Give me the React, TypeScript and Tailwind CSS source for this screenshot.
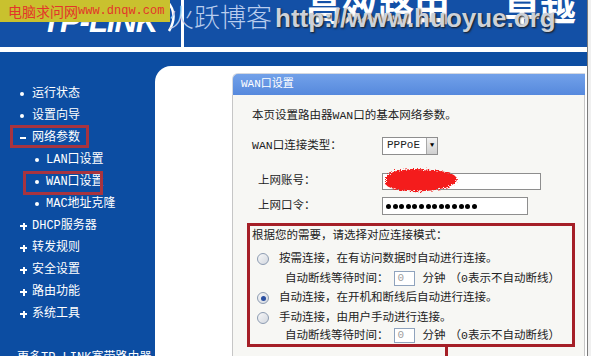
import React from "react";

type Item = {
  mark: "dot" | "minus" | "plus";
  label: string;
  sub?: boolean;
  box?: "group" | "page";
};

const menu: Item[] = [
  { mark: "dot", label: "运行状态" },
  { mark: "dot", label: "设置向导" },
  { mark: "minus", label: "网络参数", box: "group" },
  { mark: "dot", label: "LAN口设置", sub: true },
  { mark: "dot", label: "WAN口设置", sub: true, box: "page" },
  { mark: "dot", label: "MAC地址克隆", sub: true },
  { mark: "plus", label: "DHCP服务器" },
  { mark: "plus", label: "转发规则" },
  { mark: "plus", label: "安全设置" },
  { mark: "plus", label: "路由功能" },
  { mark: "plus", label: "系统工具" },
];

const Mark = ({ kind }: { kind: Item["mark"] }) => {
  if (kind === "dot") return <span className="w-[4px] h-[4px] rounded-full bg-white" />;
  if (kind === "minus") return <span className="w-[6px] h-[2px] bg-white" />;
  return (
    <span className="relative w-[7px] h-[7px]">
      <span className="absolute left-0 top-[2.5px] w-[7px] h-[2px] bg-white" />
      <span className="absolute top-0 left-[2.5px] w-[2px] h-[7px] bg-white" />
    </span>
  );
};

const Header = () => (
  <div className="relative h-[47px] shrink-0 flex overflow-hidden bg-[#1350a6]">
    <div className="w-[181px]" />
    <div className="w-[3px] bg-white" />
    <div className="flex-1" />

    {/* slogan behind the watermark */}
    <div className="absolute left-[306px] top-[-13px] flex text-[36px] font-bold leading-none text-white font-['Noto_Sans_CJK_SC',sans-serif]">
      <span>高效路由</span>
      <span className="ml-[54px]">卓越</span>
    </div>

    {/* logo */}
    <div className="absolute left-[42px] top-[6px] text-[31px] font-bold italic leading-none tracking-[-1px] text-white font-['Liberation_Sans',sans-serif]">
      TP-LINK
    </div>
    <svg className="absolute left-[164px] top-0" width="16" height="34" viewBox="0 0 16 34">
      <path d="M3 1 Q15 14 5 31" stroke="#ffffff" strokeWidth="2.5" fill="none" />
    </svg>

    {/* watermarks */}
    <div className="absolute left-0 top-0 w-[170px] h-[22px] bg-[#c9c12e] flex items-center pl-[8px] text-[#e3352a]">
      <span className="text-[14px] leading-none font-['Noto_Sans_CJK_SC',sans-serif]">电脑求问网</span>
      <span className="text-[12px] leading-none font-['Liberation_Mono',monospace]">www.dnqw.com</span>
    </div>
    <div className="absolute left-[168px] top-[3px] text-[26px] font-light leading-none text-[#b9cdee] font-['Noto_Sans_CJK_SC',sans-serif]">
      火跃博客
    </div>
    <div className="absolute left-[275px] top-[5px] text-[26px] font-bold leading-none text-[#cdd1d8] font-['Liberation_Sans',sans-serif] [text-shadow:1px_1px_2px_#1b1b1b]">
      http://www.huoyue.org
    </div>
  </div>
);

const Sidebar = () => (
  <div className="w-[155px] shrink-0 pt-[31px] text-[12px] text-white">
    {menu.map((item) => (
      <div key={item.label} className={`relative h-[22px] flex items-center ${item.sub ? "pl-[35px]" : "pl-[20px]"}`}>
        <span className={`flex items-center ${item.sub ? "w-[11px]" : "w-[12px]"}`}>
          <Mark kind={item.mark} />
        </span>
        <span className="leading-none">{item.label}</span>
        {item.box === "group" && (
          <div className="absolute left-[10px] top-[-2px] w-[79px] h-[23px] border-[3px] border-[#a8343f]" />
        )}
        {item.box === "page" && (
          <div className="absolute left-[23px] top-0 w-[80px] h-[24px] border-[3px] border-[#a8343f]" />
        )}
      </div>
    ))}
    <div className="mt-[22px] h-[22px] flex items-center pl-[17px] leading-none">更多TP-LINK宽带路由器</div>
  </div>
);

const Radio = ({ checked }: { checked?: boolean }) => (
  <span className="w-[12px] h-[12px] rounded-full border border-[#8d9cb2] bg-gradient-to-br from-[#f7f7f7] to-[#d3d8e0] flex items-center justify-center">
    {checked && <span className="w-[5px] h-[5px] rounded-full bg-[#2a4fa0]" />}
  </span>
);

const WaitRow = ({ h }: { h: string }) => (
  <div className={`${h} flex items-center pl-[35px]`}>
    <span>自动断线等待时间：</span>
    <span className="ml-[5px] w-[21px] h-[15px] border border-[#8fa3bd] bg-white text-[#a0a0a0] text-[11px] leading-[13px] pl-[3px]">0</span>
    <span className="ml-[8px]">分钟</span>
    <span className="ml-[4px]">（0表示不自动断线）</span>
  </div>
);

const Main = () => (
  <div className="flex-1 pt-[14px] flex flex-col">
    <div className="flex-1 bg-white rounded-tl-[16px] pl-[77px] pt-[7px] flex flex-col">
      <div className="w-[353px] flex-1 flex flex-col">
        <div className="h-[22px] shrink-0 rounded-tl-[6px] bg-gradient-to-b from-[#72a1e9] to-[#5689dd] border-t border-l border-[#d4d8e0] flex items-center pl-[8px] text-[11px] text-white leading-none">
          WAN口设置
        </div>
        <div className="flex-1 border-l border-r border-[#c6c6c6] bg-[#f7f7f4] text-[11.5px] text-[#222]">
          <div className="mt-[11px] h-[20px] flex items-center pl-[19px]">本页设置路由器WAN口的基本网络参数。</div>

          <div className="mt-[9px] h-[21px] flex items-center pl-[19px]">
            <span className="w-[130px]">WAN口连接类型：</span>
            <div className="w-[56px] h-[18px] border border-[#8e8e8e] bg-white flex">
              <span className="flex-1 flex items-center pl-[4px] text-[11px]">PPPoE</span>
              <span className="w-[11px] border-l border-[#a8a8a8] bg-gradient-to-b from-[#f2f2f2] to-[#cfcfcf] flex items-center justify-center text-[7px] text-black">▼</span>
            </div>
          </div>

          <div className="mt-[15px] h-[20px] flex items-center pl-[25px]">
            <span className="w-[124px]">上网账号：</span>
            <div className="relative w-[159px] h-[17px] border border-[#8e8e8e] bg-white">
              <svg className="absolute left-0 top-[-8px]" width="78" height="28" viewBox="0 0 78 28">
                <defs>
                  <filter id="rough">
                    <feTurbulence type="fractalNoise" baseFrequency="0.9" numOctaves="2" result="n" />
                    <feDisplacementMap in="SourceGraphic" in2="n" scale="6" />
                  </filter>
                </defs>
                <path
                  d="M3 10 C12 3 30 2 48 4 C62 5 74 8 74 13 C74 19 60 24 42 25 C24 26 8 24 3 19 Z"
                  fill="#f41c1c"
                  filter="url(#rough)"
                />
              </svg>
            </div>
          </div>

          <div className="mt-[5px] h-[20px] flex items-center pl-[25px]">
            <span className="w-[124px]">上网口令：</span>
            <div className="w-[146px] h-[18px] border border-[#8e8e8e] bg-white flex items-center gap-[1.6px] pl-[3px]">
              {Array.from({ length: 14 }).map((_, i) => (
                <span key={i} className="w-[5px] h-[5px] rounded-full bg-black" />
              ))}
            </div>
          </div>

          <div className="mt-[7px] ml-[14px] w-[328px] border-[3px] border-[#a51f27]">
            <div className="h-[20px] flex items-center pl-[2px]">根据您的需要，请选择对应连接模式：</div>
            <div className="mt-[3px] h-[20px] flex items-center pl-[7px]">
              <Radio />
              <span className="ml-[10px]">按需连接，在有访问数据时自动进行连接。</span>
            </div>
            <WaitRow h="h-[19px]" />
            <div className="h-[20px] flex items-center pl-[7px]">
              <Radio checked />
              <span className="ml-[10px]">自动连接，在开机和断线后自动进行连接。</span>
            </div>
            <div className="h-[19px] flex items-center pl-[7px]">
              <Radio />
              <span className="ml-[10px]">手动连接，由用户手动进行连接。</span>
            </div>
            <WaitRow h="h-[17px]" />
          </div>
          <div className="ml-[212px] w-[3px] h-[12px] bg-[#a51f27]" />
        </div>
      </div>
    </div>
  </div>
);

export default function App() {
  return (
    <div className="w-[591px] h-[356px] overflow-hidden flex bg-[#efefef] font-['Liberation_Mono','Noto_Sans_CJK_SC',monospace]">
      <div className="w-[587px] h-full flex flex-col bg-white">
        <Header />
        <div className="h-[5px] shrink-0 bg-white" />
        <div className="flex flex-1 min-h-0 bg-[#0c4da2]">
          <Sidebar />
          <Main />
        </div>
      </div>
      <div className="w-px h-full bg-[#7c7c7c]" />
      <div className="flex-1 bg-[#f0f0f0]" />
    </div>
  );
}
